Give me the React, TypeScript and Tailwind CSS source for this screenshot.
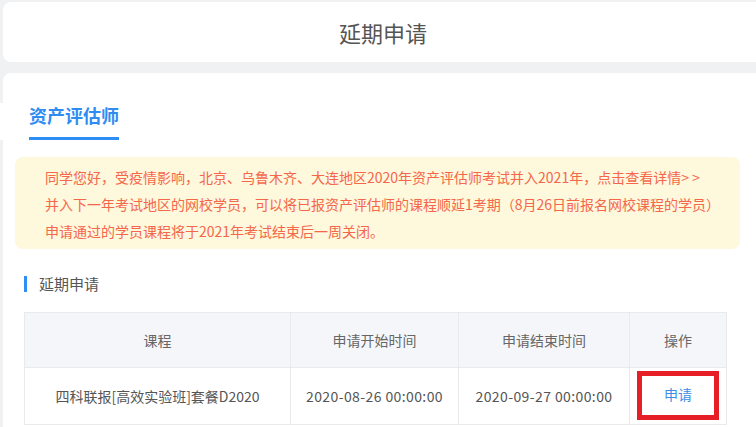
import React from 'react';

const rows = [
    {
        course: '四科联报[高效实验班]套餐D2020',
        start: '2020-08-26 00:00:00',
        end: '2020-09-27 00:00:00',
    },
];

const App: React.FC = () => {
    return (
        <div
            className="min-h-screen w-[756px] overflow-hidden bg-[#f0f1f3] pt-[2px] pl-[3px]"
            style={{ fontFamily: '"Noto Sans CJK SC", "Noto Sans", sans-serif' }}
        >
            {/* 顶部标题 */}
            <div className="w-[760px] h-[60px] bg-white rounded-l-[8px] flex items-center justify-center">
                <h1 className="text-[22px] text-[#555] font-normal">延期申请</h1>
            </div>

            <div className="w-[760px] mt-[11px] bg-white rounded-tl-[8px] pt-[30px] pb-[20px]">
                {/* 科目标签 */}
                <div className="-ml-[3px] pl-[29px] bg-white">
                    <div className="inline-flex flex-col">
                        <span className="text-[18px] leading-[24px] font-bold text-[#2f8cf2]">资产评估师</span>
                        <span className="mt-[10px] h-[3px] w-[90px] bg-[#2f8ef5]" />
                    </div>
                </div>

                {/* 提示 */}
                <div className="mt-[17px] ml-[12px] w-[725px] rounded-[8px] bg-[#fef8dc] pt-[7px] pb-[4px] pl-[30px] text-[14px] leading-[27px] text-[#f4674b]">
                    <p>同学您好，受疫情影响，北京、乌鲁木齐、大连地区2020年资产评估师考试并入2021年，点击查看详情&gt; &gt;</p>
                    <p>并入下一年考试地区的网校学员，可以将已报资产评估师的课程顺延1考期（8月26日前报名网校课程的学员）</p>
                    <p>申请通过的学员课程将于2021年考试结束后一周关闭。</p>
                </div>

                {/* 延期申请 */}
                <div className="mt-[25px] ml-[21px] flex items-center h-[20px]">
                    <span className="w-[3px] h-[16px] bg-[#2f8ef5]" />
                    <span className="ml-[12px] text-[15px] text-[#555]">延期申请</span>
                </div>

                <table className="mt-[18px] ml-[21px] w-[702px] border-collapse text-[14px] table-fixed">
                    <colgroup>
                        <col className="w-[266px]" />
                        <col className="w-[168px]" />
                        <col className="w-[171px]" />
                        <col className="w-[97px]" />
                    </colgroup>
                    <thead>
                        <tr className="h-[55px] bg-[#f5f6fa] text-[#666]">
                            <th className="border border-[#e9eaee] font-normal">课程</th>
                            <th className="border border-[#e9eaee] font-normal">申请开始时间</th>
                            <th className="border border-[#e9eaee] font-normal">申请结束时间</th>
                            <th className="border border-[#e9eaee] font-normal">操作</th>
                        </tr>
                    </thead>
                    <tbody>
                        {rows.map((r) => (
                            <tr key={r.course} className="h-[57px] text-[#555]">
                                <td className="border border-[#e9eaee] text-center">{r.course}</td>
                                <td className="border border-[#e9eaee] text-center tracking-[0.4px]">{r.start}</td>
                                <td className="border border-[#e9eaee] text-center tracking-[0.4px]">{r.end}</td>
                                <td className="border border-[#e9eaee] align-top pt-[3px]">
                                    <div className="flex justify-center">
                                        <span className="w-[82px] h-[49px] border-[5px] border-[#e61f27] flex items-center justify-center pb-[3px] text-[#3a8ee6]">
                                            申请
                                        </span>
                                    </div>
                                </td>
                            </tr>
                        ))}
                    </tbody>
                </table>
            </div>
        </div>
    );
};

export default App;
